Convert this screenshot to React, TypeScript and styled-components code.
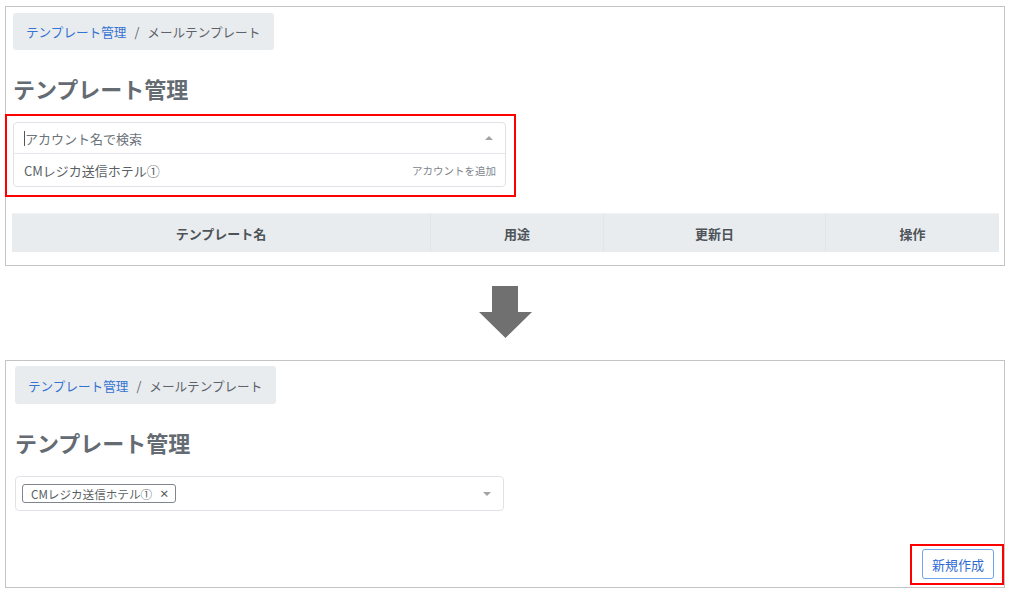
import React from "react";
import styled, { createGlobalStyle } from "styled-components";

const GlobalStyle = createGlobalStyle`
    body {
        margin: 0;
        background-color: white;
        font-family: "Noto Sans CJK JP", "Noto Sans", sans-serif;
        color: #555;
    }
`

const Page = styled.div`
    width: 1016px;
    height: 596px;
    overflow: hidden;
`

const Panel = styled.div<{ $height: number; $padTop: number; $padLeft: number }>`
    box-sizing: border-box;
    width: 1000px;
    height: ${p => p.$height}px;
    margin-left: 5px;
    border: 1px solid #c4c4c4;
    padding: ${p => p.$padTop}px 0 0 ${p => p.$padLeft}px;
    display: flex;
    flex-direction: column;
    align-items: flex-start;
`

const Breadcrumb = styled.div<{ $height: number }>`
    box-sizing: border-box;
    width: 261px;
    height: ${p => p.$height}px;
    padding: 0 13px;
    background-color: #e9ecef;
    border-radius: 3px;
    display: flex;
    align-items: center;
    gap: 8px;
    white-space: nowrap;
    font-size: 12.6px;
    color: #5c636a;

    & > a {
        color: #3573d2;
        text-decoration: none;
    }
`

const Title = styled.h1`
    margin: 23px 0 0 0;
    font-size: 22px;
    line-height: 30px;
    font-weight: bold;
    color: #646b72;
`

// red outline used to point at a part of the page
const Callout = styled.div<{ $pad: string }>`
    box-sizing: border-box;
    border: 2px solid #ff0000;
    padding: ${p => p.$pad};
`

const SelectBox = styled.div<{ $width: number }>`
    width: ${p => p.$width}px;
    border: 1px solid #dfe3e8;
    border-radius: 4px;
    background-color: white;
`

const SearchRow = styled.div`
    height: 30px;
    padding: 0 12px 0 10px;
    display: flex;
    align-items: center;
    border-bottom: 1px solid #e3e6ea;
    font-size: 13px;
    color: #6c737a;
`

const TextCursor = styled.span`
    width: 1px;
    height: 15px;
    background-color: #555;
`

const OptionRow = styled.div`
    height: 32px;
    padding: 0 9px 0 10px;
    display: flex;
    align-items: center;
    justify-content: space-between;
    font-size: 13px;
    color: #5a5f64;
`

const Hint = styled.span`
    font-size: 10.5px;
    color: #80868c;
`

const Caret = styled.span<{ $up?: boolean }>`
    margin-left: auto;
    width: 0;
    height: 0;
    border-left: 4px solid transparent;
    border-right: 4px solid transparent;
    ${p => p.$up
        ? "border-bottom: 4px solid #a0a4a8;"
        : "border-top: 4px solid #a0a4a8;"}
`

const ValueRow = styled.div`
    height: 33px;
    padding: 0 12px 0 6px;
    display: flex;
    align-items: center;
`

const Tag = styled.span`
    box-sizing: border-box;
    height: 19px;
    padding: 0 6px 0 8px;
    border: 1px solid #7f858a;
    border-radius: 3px;
    display: flex;
    align-items: center;
    gap: 7px;
    font-size: 11.6px;
    color: #5a5f64;

    & > b {
        font-size: 10px;
        color: #555;
    }
`

const HeaderTable = styled.div`
    margin: 16px 0 0 -1px;
    width: 987px;
    height: 39px;
    display: grid;
    grid-template-columns: 418px 173px 222px 174px;
    background-color: #e9ecef;
    border-top: 1px solid #f1f3f5;
    box-sizing: border-box;
`

const HeaderCell = styled.div`
    display: flex;
    align-items: center;
    justify-content: center;
    font-size: 13px;
    font-weight: bold;
    color: #4d5358;

    & + & {
        border-left: 1px solid #e1e5e9;
    }
`

const ArrowIcon = styled.svg`
    display: block;
    margin: 20px 0 22px 479px;
`

const ButtonRow = styled.div`
    align-self: stretch;
    margin-top: 33px;
    display: flex;
    justify-content: flex-end;
`

const OutlineButton = styled.button`
    width: 72px;
    height: 30px;
    padding: 0;
    background-color: white;
    border: 1px solid #6ea6ee;
    border-radius: 3px;
    font-family: inherit;
    font-size: 13px;
    color: #2f6bd2;
`

const columns = ["テンプレート名", "用途", "更新日", "操作"];

export default function App() {
    return (
        <Page>
            <GlobalStyle />
            <div style={{ height: 6 }} />
            <Panel $height={260} $padTop={6} $padLeft={7}>
                <Breadcrumb $height={37}>
                    <a href="#">テンプレート管理</a>
                    <span>/</span>
                    <span>メールテンプレート</span>
                </Breadcrumb>
                <Title>テンプレート管理</Title>
                <Callout $pad="6px 8px 8px 6px" style={{ marginTop: 11, marginLeft: -8 }}>
                    <SelectBox $width={491}>
                        <SearchRow>
                            <TextCursor />
                            <span>アカウント名で検索</span>
                            <Caret $up />
                        </SearchRow>
                        <OptionRow>
                            <span>CMレジカ送信ホテル①</span>
                            <Hint>アカウントを追加</Hint>
                        </OptionRow>
                    </SelectBox>
                </Callout>
                <HeaderTable>
                    {columns.map(name => <HeaderCell key={name}>{name}</HeaderCell>)}
                </HeaderTable>
            </Panel>

            <ArrowIcon width="53" height="52" viewBox="0 0 53 52">
                <polygon points="13,0 39,0 39,26 53,26 26.5,52 0,26 13,26" fill="#707070" />
            </ArrowIcon>

            <Panel $height={228} $padTop={5} $padLeft={9}>
                <Breadcrumb $height={38}>
                    <a href="#">テンプレート管理</a>
                    <span>/</span>
                    <span>メールテンプレート</span>
                </Breadcrumb>
                <Title>テンプレート管理</Title>
                <div style={{ marginTop: 19 }}>
                    <SelectBox $width={487}>
                        <ValueRow>
                            <Tag>
                                CMレジカ送信ホテル①
                                <b>×</b>
                            </Tag>
                            <Caret />
                        </ValueRow>
                    </SelectBox>
                </div>
                <ButtonRow>
                    <Callout $pad="3px 8px 4px 10px">
                        <OutlineButton>新規作成</OutlineButton>
                    </Callout>
                </ButtonRow>
            </Panel>
        </Page>
    );
}
